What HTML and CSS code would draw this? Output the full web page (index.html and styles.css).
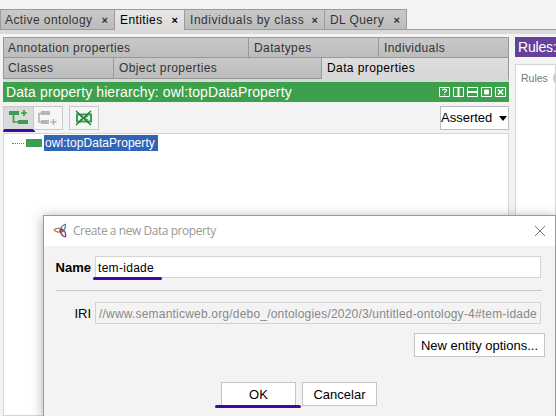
FILE: index.html
```
<!DOCTYPE html>
<html lang="en">
<head>
<meta charset="utf-8">
<title>Entities</title>
<link rel="stylesheet" href="styles.css">
</head>
<body>
<nav class="main-tabs">
  <div class="tab t-active"><span>Active ontology</span><b>×</b></div>
  <div class="tab t-entities current"><span>Entities</span><b>×</b></div>
  <div class="tab t-individuals"><span>Individuals by class</span><b>×</b></div>
  <div class="tab t-query"><span>DL Query</span><b>×</b></div>
</nav>
<main class="workspace">
  <section class="left">
    <div class="sub-tabs upper"><div class="sub">Annotation properties</div><div class="sub">Datatypes</div><div class="sub">Individuals</div></div>
    <div class="sub-tabs lower"><div class="sub">Classes</div><div class="sub">Object properties</div><div class="sub current">Data properties</div></div>
    <header class="view-head"><span>Data property hierarchy: owl:topDataProperty</span>
      <svg width="68" height="12" viewBox="0 0 68 12" fill="none" stroke="#fff"><path d="M.5 1.500h10v9H.5zM14.500 1.500h10v9h-10zM28.500 1.500h10v9h-10zM42.500 1.500h10v9h-10zM56.500 1.500h10v9h-10z"/><path d="M19.500 2v8M29 6h9" stroke-width="2"/><path d="M45.500 4h4v4h-4z" fill="#fff"/><path d="M59 3.500l5 5m0-5l-5 5" stroke-width="1.700"/><path d="M3.500 4.500c0-1.800 4-1.800 4 0 0 1.200-2 .8-2 2.500M5.500 8v1.200" stroke-width="1.300"/></svg>
    </header>
    <div class="toolbar">
      <div class="tool pressed"><svg width="20" height="16" viewBox="0 0 20 16"><path d="M0 1h10v4H0zM9 10h10v4H9z" fill="#3c9d50"/><path d="M4.500 5v7H9M15 0v6M12 3h6" fill="none" stroke="#3c9d50" stroke-width="1.700"/></svg></div>
      <div class="tool off"><svg width="20" height="16" viewBox="0 0 20 16"><path d="M3 1h9v4H3zM3 10h8v4H3z" fill="#b5b5b5"/><path d="M3 3.500H1v8.500h2M15.500 9v6M12.500 12h6" fill="none" stroke="#b0b0b0" stroke-width="1.500"/></svg></div>
      <div class="tool delete"><svg width="18" height="18" viewBox="0 0 18 18" fill="none" stroke="#36a14c"><path d="M2 5.500h14v7H2z" stroke-width="2"/><path d="M5 7l8 4m0-4l-8 4" stroke-width="1.300"/><path d="M1 2l15 14M16 2L1 16" stroke="#277a3a" stroke-width="1.500"/></svg></div>
      <div class="select">Asserted<i></i></div>
    </div>
    <div class="tree"><div class="node"><span class="dots"></span><span class="chip"></span><span class="name">owl:topDataProperty</span></div></div>
  </section>
  <aside class="right"><div class="rules-head">Rules:</div><div class="rules-body">Rules <i></i></div></aside>
</main>
<section class="dialog">
  <header class="title"><svg class="logo" width="14" height="16" viewBox="0 0 14 16" fill="none" stroke-width="1.200"><path d="M.7 7q5-3.500 9-.5-3 5-9 .5" stroke="#c76b43"/><path d="M12.500 1q-6 3-5 8 5 0 5-8" stroke="#587fa5"/><path d="M12.500 14q1-7-5-8-1 6 5 8" stroke="#67406f"/><circle cx="8.500" cy="7.500" r="1.500" stroke="#8c4057"/></svg><span>Create a new Data property</span><svg class="close" width="12" height="12" viewBox="0 0 12 12"><path d="M1 1l10 10M11 1L1 11" stroke="#777" fill="none"/></svg></header>
  <div class="field name-field"><label>Name</label><div class="input"><span>tem-idade</span></div></div>
  <div class="rule"></div>
  <div class="field iri-field"><label>IRI</label><div class="input"><span>//www.semanticweb.org/debo_/ontologies/2020/3/untitled-ontology-4#tem-idade</span></div></div>
  <div class="options"><div class="button wide"><span>New entity options...</span></div></div>
  <div class="actions"><div class="button ok">OK</div><div class="button"><span>Cancelar</span></div></div>
</section>
</body>
</html>
```
FILE: styles.css
```
* { box-sizing: border-box; }
body { margin: 0; width: 556px; height: 416px; overflow: hidden; position: relative; background: #f3f3f3; font: 12px/16px "Liberation Sans", Arial, sans-serif; color: #000; }
svg { display: block; flex: none; }
.main-tabs { display: flex; height: 34px; padding-top: 9px; background: linear-gradient(#f3f3f3 29px, #999 29px, #999 30px, #dadada 30px); }
.tab { display: flex; justify-content: space-between; height: 21px; padding: 2px 6px 0 5px; border: 1px solid #9b9b9b; border-left-width: 0; background: linear-gradient(#c9c9c9, #bcbcbc); color: #333; white-space: nowrap; letter-spacing: .4px; }
.tab b { font-size: 11px; letter-spacing: 0; }
.t-active { width: 115px; border-left-width: 1px; padding-left: 4px; }
.t-entities { width: 70px; }
.t-individuals { width: 140px; letter-spacing: .55px; }
.t-query { width: 82px; }
.tab.current { background: linear-gradient(#e7e7e7, #dadada); border-bottom: 0; color: #000; }
.workspace { display: flex; height: 382px; padding: 3px 0 0 3px; gap: 6px; }
.left { display: flex; flex-direction: column; width: 506px; flex: none; }
.sub-tabs { display: grid; background: #dadada; border-right: 1px solid #999; letter-spacing: .4px; }
.upper { height: 20px; grid-template-columns: 245px 130px 1fr; }
.lower { height: 25px; grid-template-columns: 110px 208px 1fr; border-bottom: 4px solid #d8d8d8; }
.sub { border: 1px solid #999; border-right: 0; border-bottom: 0; background: linear-gradient(#c8c8c8, #bcbcbc); padding: 2px 5px; color: #333; white-space: nowrap; }
.sub:first-child { padding-left: 4px; }
.lower .sub { border-bottom: 1px solid #999; }
.lower .sub.current { background: linear-gradient(#dedede, #d7d7d7); color: #000; border-bottom: 0; }
.view-head { display: flex; justify-content: space-between; align-items: center; height: 20px; background: #3da04d; color: #fff; padding: 0 2px 0 3px; font-size: 14px; letter-spacing: .11px; white-space: nowrap; }
.toolbar { display: flex; height: 31px; padding-top: 4px; }
.tool { width: 30px; height: 24px; border: 1px solid #c9c9c9; background: #f6f6f6; display: flex; align-items: center; justify-content: center; }
.pressed { width: 32px; background: #dadada; height: 26px; border-bottom: 3px solid #3a0ca3; margin-right: -2px; }
.delete { margin-left: 6px; }
.select { display: flex; align-items: center; margin-left: auto; width: 69px; height: 24px; border: 1px solid #bdbdbd; background: #fff; font-size: 13px; }
.select i { margin-left: auto; margin-right: 1px; border: 4px solid transparent; border-top: 5px solid #000; border-bottom: 0; }
.tree { flex: 1; background: #fff; border: 1px solid #d5d5d5; padding-top: 1px; }
.node { display: flex; align-items: center; height: 16px; margin-left: 8px; }
.dots { width: 12px; border-top: 1px dotted #777; }
.chip { width: 16px; height: 8px; background: #3d9d50; margin: 0 2px; }
.name { height: 16px; width: 114px; padding-left: 1px; background: #3064b7; color: #fff; letter-spacing: .06px; white-space: nowrap; }
.right { flex: 1; display: flex; flex-direction: column; gap: 7px; }
.rules-head { height: 20px; background: #65419a; color: #fff; padding: 2px 0 2px 3px; font-size: 14px; letter-spacing: -.2px; white-space: nowrap; }
.rules-body { flex: 1; position: relative; border: 1px solid #d5d5d5; background: #fff; color: #777; font-size: 10.5px; padding: 5px; overflow: hidden; }
.rules-body i { position: absolute; left: 37px; top: 5px; width: 16px; height: 16px; border-radius: 50%; background: #c4c4c4; }
.dialog { position: absolute; left: 43px; top: 215px; width: 513px; height: 202px; background: #f3f3f3; border: 1px solid #999; border-bottom: 0; box-shadow: 0 2px 12px #0005; display: flex; flex-direction: column; }
.title { display: flex; align-items: center; height: 30px; background: #fff; padding: 0 9px; color: #999; letter-spacing: -.45px; font-family: "Open Sans", sans-serif; font-size: 12px; }
.title span { margin-left: 6px; }
.close { margin-left: auto; }
.field { display: flex; height: 22px; align-items: center; }
.name-field { margin-top: 10px; }
.field label { width: 51px; flex: none; padding: 2px 4px 0 0; text-align: right; font-size: 13px; }
.name-field label { font-weight: bold; }
.input { width: 446px; height: 22px; border: 1px solid #d3d3d3; background: #fff; padding: 3px 2px 0; white-space: nowrap; }
.name-field .input { position: relative; letter-spacing: .3px; }
.name-field .input::after, .ok::after { content: ""; position: absolute; height: 3px; background: #3a0ca3; border-radius: 2px; left: -3px; top: 20px; width: 69px; }
.rule { height: 1px; background: #c7c7c7; margin: 12px 13px 11px 12px; }
.iri-field .input { background: #f3f3f3; color: #888; padding-left: 3px; letter-spacing: .2px; }
.options { display: flex; justify-content: flex-end; padding: 9px 10px 0; }
.button { display: flex; align-items: center; justify-content: center; width: 75px; height: 24px; padding-top: 1px; border: 1px solid #c4c4c4; background: #fff; white-space: nowrap; font-size: 13px; }
.wide { width: 131px; }
.actions { display: flex; gap: 6px; margin: 25px 0 0 177px; }
.ok { position: relative; }
.ok::after { left: -7px; top: 22px; width: 86px; }
```
